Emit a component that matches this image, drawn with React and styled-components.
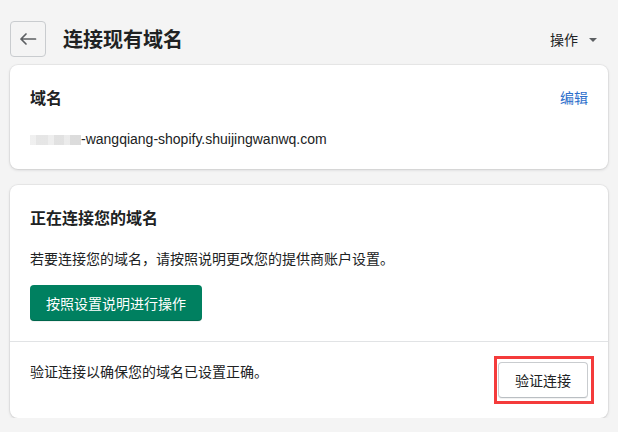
import React from "react";
import styled, { createGlobalStyle } from "styled-components";

const GlobalStyle = createGlobalStyle`
  html, body { margin: 0; padding: 0; }
  body {
    background: #f4f4f4;
    font-family: "Noto Sans", "Noto Sans CJK SC", sans-serif;
    color: #202223;
    -webkit-font-smoothing: antialiased;
  }
`;

const Page = styled.div`
  padding: 21px 10px 0;
  display: flex;
  flex-direction: column;
`;

const Header = styled.header`
  display: flex;
  align-items: center;
  height: 36px;
  margin-bottom: 8px;
`;

const BackButton = styled.button`
  width: 36px;
  height: 36px;
  box-sizing: border-box;
  border: 1px solid #c9cccf;
  border-radius: 4px;
  background: transparent;
  display: flex;
  align-items: center;
  justify-content: center;
  padding: 0;
  cursor: pointer;
`;

const Title = styled.h1`
  margin: 0 0 0 17px;
  font-size: 20px;
  line-height: 28px;
  font-weight: 600;
  font-family: "Noto Sans CJK SC", sans-serif;
`;

const Actions = styled.div`
  margin-left: auto;
  display: flex;
  align-items: center;
  gap: 11px;
  padding-right: 11px;
  font-size: 14px;
  line-height: 20px;
  font-family: "Noto Sans CJK SC", sans-serif;
  color: #202223;
`;

const Caret = styled.span`
  width: 0;
  height: 0;
  border-left: 4px solid transparent;
  border-right: 4px solid transparent;
  border-top: 4px solid #5c5f62;
  margin-top: 1px;
`;

const Cards = styled.div`
  display: flex;
  flex-direction: column;
  gap: 16px;
`;

const Card = styled.section`
  background: #fff;
  border-radius: 8px;
  box-shadow: 0 0 0 1px rgba(63, 63, 68, 0.05), 0 1px 3px rgba(63, 63, 68, 0.18);
`;

const Section = styled.div`
  padding: 20px;
  border-top: ${(p) => (p.$divider ? "1px solid #e1e3e5" : "none")};
`;

const SectionHead = styled.div`
  display: flex;
  justify-content: space-between;
  align-items: center;
`;

const CardTitle = styled.h2`
  margin: 0;
  font-size: 16px;
  line-height: 24px;
  font-weight: 600;
  font-family: "Noto Sans CJK SC", sans-serif;
`;

const Link = styled.a`
  font-size: 14px;
  line-height: 20px;
  color: #2c6ecb;
  text-decoration: none;
  font-family: "Noto Sans CJK SC", sans-serif;
  cursor: pointer;
`;

const Text = styled.p`
  margin: ${(p) => p.$mt || 0}px 0 0;
  font-size: 14px;
  line-height: 20px;
  font-family: ${(p) => (p.$latin ? '"Liberation Sans", "Noto Sans CJK SC", sans-serif' : 'inherit')};
`;

const Blur = styled.span`
  display: inline-block;
  width: 51px;
  height: 10px;
  vertical-align: -1px;
  background: linear-gradient(
    90deg,
    #eeeeee 0 6px,
    #e3e3e3 6px 18px,
    #ececec 18px 24px,
    #dedede 24px 34px,
    #e9e9e9 34px 40px,
    #d8d8d8 40px 51px
  );
  opacity: 0.9;
`;

const Row = styled.div`
  display: flex;
  justify-content: space-between;
  align-items: flex-start;
`;

const PrimaryButton = styled.button`
  margin-top: 16px;
  height: 36px;
  padding: 0 16px;
  border: none;
  border-radius: 4px;
  background: #008060;
  color: #fff;
  font-size: 14px;
  font-family: "Noto Sans CJK SC", sans-serif;
  box-shadow: inset 0 -1px 0 rgba(0, 0, 0, 0.2), 0 1px 0 rgba(0, 0, 0, 0.05);
  cursor: pointer;
`;

const Highlight = styled.div`
  position: relative;
  &::after {
    content: "";
    position: absolute;
    top: -6px;
    bottom: -6px;
    left: -4px;
    right: -6px;
    border: 3px solid #f43b3b;
    pointer-events: none;
  }
`;

const SecondaryButton = styled.button`
  height: 36px;
  padding: 0 16px;
  box-sizing: border-box;
  background: #fff;
  border: 1px solid #c9cccf;
  border-bottom-color: #babfc3;
  border-radius: 4px;
  color: #202223;
  font-size: 14px;
  font-family: "Noto Sans CJK SC", sans-serif;
  box-shadow: 0 1px 0 rgba(0, 0, 0, 0.05);
  cursor: pointer;
`;

const ArrowLeft = () => (
  <svg width="20" height="20" viewBox="0 0 20 20" fill="none">
    <path
      d="M17.5 10H3M8 5L3 10l5 5"
      stroke="#5c5f62"
      strokeWidth="1.7"
      strokeLinecap="round"
      strokeLinejoin="round"
    />
  </svg>
);

export default function App() {
  return (
    <>
      <GlobalStyle />
      <Page>
        <Header>
          <BackButton aria-label="返回">
            <ArrowLeft />
          </BackButton>
          <Title>连接现有域名</Title>
          <Actions>
            操作
            <Caret />
          </Actions>
        </Header>
        <Cards>
          <Card>
            <Section>
              <SectionHead>
                <CardTitle>域名</CardTitle>
                <Link>编辑</Link>
              </SectionHead>
              <Text $mt={20} $latin>
                <Blur />
                -wangqiang-shopify.shuijingwanwq.com
              </Text>
            </Section>
          </Card>
          <Card>
            <Section>
              <CardTitle>正在连接您的域名</CardTitle>
              <Text $mt={20}>若要连接您的域名，请按照说明更改您的提供商账户设置。</Text>
              <PrimaryButton>按照设置说明进行操作</PrimaryButton>
            </Section>
            <Section $divider>
              <Row>
                <Text>验证连接以确保您的域名已设置正确。</Text>
                <Highlight>
                  <SecondaryButton>验证连接</SecondaryButton>
                </Highlight>
              </Row>
            </Section>
          </Card>
        </Cards>
      </Page>
    </>
  );
}
